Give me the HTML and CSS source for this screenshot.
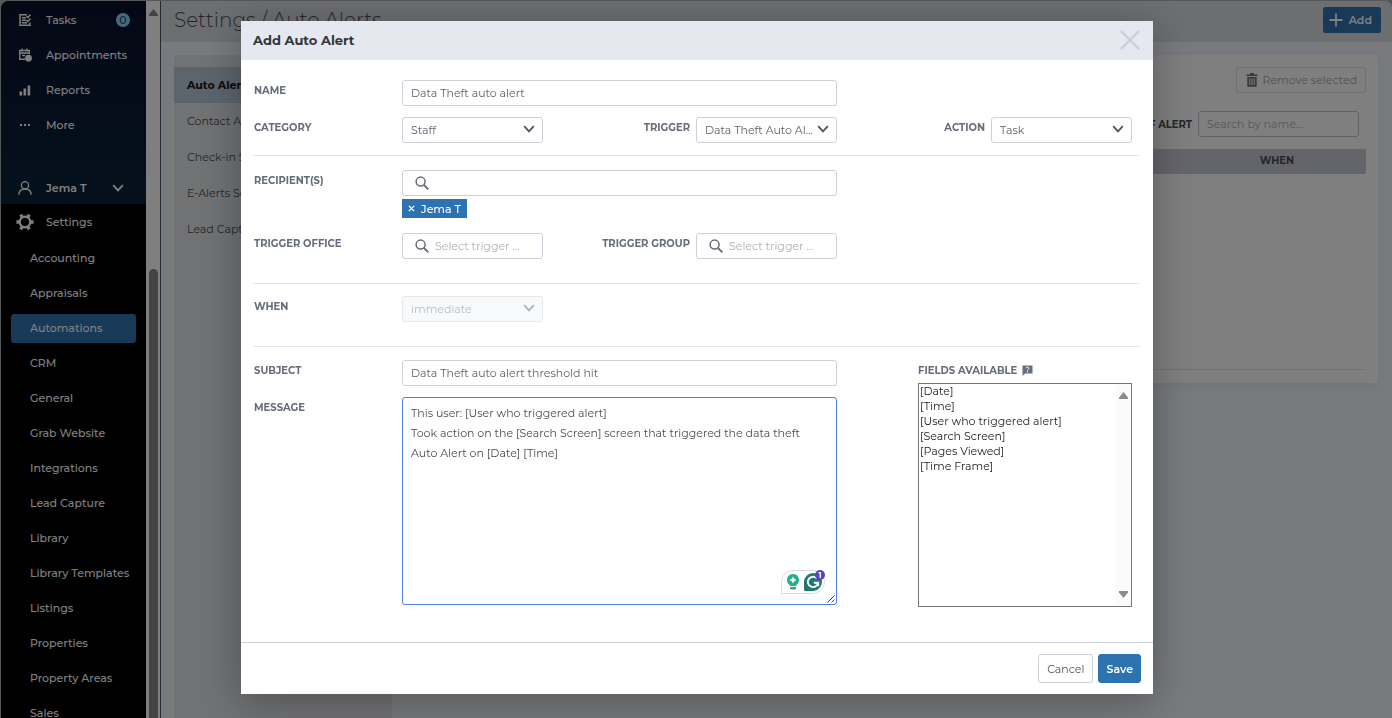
FILE: index.html
```html
<!DOCTYPE html>
<html lang="en">
<head>
<meta charset="UTF-8">
<meta name="viewport" content="width=device-width, initial-scale=1">
<title>Settings / Auto Alerts</title>
<link rel="stylesheet" href="styles.css">
</head>
<body>

<svg class="defs" width="0" height="0" aria-hidden="true">
  <symbol id="chevron" viewBox="0 0 12 8"><path d="M1.2 1.2 6 6.4l4.8-5.2" fill="none" stroke="currentColor" stroke-width="1.8"/></symbol>
  <symbol id="search" viewBox="0 0 14 14"><circle cx="5.6" cy="5.6" r="4.5" fill="none" stroke="currentColor" stroke-width="1.5"/><path d="m9 9 4.3 4.3" stroke="currentColor" stroke-width="1.8"/></symbol>
</svg>

<div class="app">
  <nav class="sidebar">
    <div class="nav-top">
      <a href="#" class="nav-item">
        <svg class="icon" viewBox="0 0 14 14" fill="none" stroke="currentColor" stroke-width="1.5"><path d="M9 1.7H2v10.6h10V9.5M4 4.7h4M4 7.2h4M4 9.7h5M8.5 3.2l1.3 1.3L12.5 1.5M8.5 7.2l1.3 1.3L12.5 5.5"/></svg>
        Tasks <span class="count">0</span>
      </a>
      <a href="#" class="nav-item">
        <svg class="icon" viewBox="0 0 14 14" fill="none" stroke="currentColor" stroke-width="1.4"><path d="M11.3 6V2.5H1.7v8.8H7M1.7 5h9.6M4 .5v3M9 .5v3M4 7.5h3"/><circle cx="10.5" cy="10.2" r="3.4" fill="currentColor" stroke="none"/></svg>
        Appointments
      </a>
      <a href="#" class="nav-item">
        <svg class="icon" viewBox="0 0 14 14" fill="currentColor"><path d="M1.5 8.5h2.6v4H1.5zM5.5 5.5h2.6v7H5.5zM9.6 2.5h2.6v10H9.6z"/></svg>
        Reports
      </a>
      <a href="#" class="nav-item">
        <svg class="icon" viewBox="0 0 14 14" fill="currentColor"><path d="M2 6h2v2H2zM6 6h2v2H6zM10 6h2v2h-2z"/></svg>
        More
      </a>
      <button type="button" class="nav-item user">
        <svg class="icon" viewBox="0 0 14 14" fill="none" stroke="currentColor" stroke-width="1.3"><circle cx="7" cy="4.2" r="3.6"/><path d="M.8 13.8C1 10 3.5 8 7 8s6 2 6.2 5.8"/></svg>
        Jema T
        <svg class="chev"><use href="#chevron"/></svg>
      </button>
    </div>
    <a href="#" class="nav-item settings">
      <svg class="icon gear" viewBox="0 0 18 18" fill="none" stroke="currentColor"><circle cx="9" cy="9" r="5.3" stroke-width="2.4"/><path d="M15 9h2.6M.4 9H3M12 3.8l1.3-2.25M4.7 16.45 6 14.2M12 14.2l1.3 2.25M4.7 1.55 6 3.8" stroke-width="3.4"/></svg>
      Settings
    </a>
    <div class="subnav">
      <a href="#">Accounting</a>
      <a href="#">Appraisals</a>
      <a href="#" class="active">Automations</a>
      <a href="#">CRM</a>
      <a href="#">General</a>
      <a href="#">Grab Website</a>
      <a href="#">Integrations</a>
      <a href="#">Lead Capture</a>
      <a href="#">Library</a>
      <a href="#">Library Templates</a>
      <a href="#">Listings</a>
      <a href="#">Properties</a>
      <a href="#">Property Areas</a>
      <a href="#">Sales</a>
    </div>
  </nav>
  <div class="scrollbar">
    <svg viewBox="0 0 9 7"><path d="M4.5 0 9 5.5V7H0V5.5z" fill="currentColor"/></svg>
    <div class="thumb"></div>
  </div>

  <main class="page">
    <header class="page-head">
      <h1>Settings / Auto Alerts</h1>
      <button type="button" class="add">
        <svg viewBox="0 0 14 14"><path d="M7 .5v13M.5 7h13" stroke="currentColor" stroke-width="1.8"/></svg>
        Add
      </button>
    </header>
    <div class="page-body">
      <nav class="side-tabs">
        <a href="#" class="active">Auto Alerts</a>
        <a href="#">Contact Alerts</a>
        <a href="#">Check-in Settings</a>
        <a href="#">E-Alerts Settings</a>
        <a href="#">Lead Capture</a>
      </nav>
      <section class="card">
        <div class="card-tools">
          <button type="button" class="remove">
            <svg viewBox="0 0 12 14" fill="currentColor"><path fill-rule="evenodd" d="M4 0h4v1.4h3.500V3H.5V1.4H4zM1.3 4h9.4v9.8H1.3zM3.3 5.5v6.5h1V5.5zm2.2 0v6.5h1V5.5zm2.2 0v6.5h1V5.5z"/></svg>
            Remove selected
          </button>
        </div>
        <div class="card-filter">
          <label for="alertSearch">TYPE OF ALERT</label>
          <input type="text" id="alertSearch" placeholder="Search by name...">
        </div>
        <table>
          <thead><tr><th>NAME</th><th>TYPE</th><th>WHEN</th></tr></thead>
        </table>
      </section>
    </div>
  </main>
</div>

<div class="overlay">
  <form class="modal" role="dialog" aria-labelledby="modalTitle">
    <header class="modal-head">
      <h2 id="modalTitle">Add Auto Alert</h2>
      <button type="button" class="close" aria-label="Close">
        <svg viewBox="0 0 20 20"><path d="m1 1 18 18M19 1 1 19" stroke="currentColor" stroke-width="2"/></svg>
      </button>
    </header>

    <div class="modal-body">
      <section class="fields basics">
        <label for="name">NAME</label>
        <input type="text" id="name" class="wide" value="Data Theft auto alert">
        <label for="category" class="first">CATEGORY</label>
        <div class="select">
          <select id="category"><option>Staff</option></select>
          <svg><use href="#chevron"/></svg>
        </div>
        <label for="trigger" class="end">TRIGGER</label>
        <div class="select">
          <select id="trigger"><option>Data Theft Auto Alert</option></select>
          <svg><use href="#chevron"/></svg>
        </div>
        <label for="action" class="end">ACTION</label>
        <div class="select">
          <select id="action"><option>Task</option></select>
          <svg><use href="#chevron"/></svg>
        </div>
      </section>

      <section class="fields who">
        <label for="recipients">RECIPIENT(S)</label>
        <div class="wide">
          <div class="search">
            <svg><use href="#search"/></svg>
            <input type="text" id="recipients">
          </div>
          <button type="button" class="chip">
            <svg viewBox="0 0 8 8"><path d="m1 1 6 6M7 1 1 7" stroke="currentColor" stroke-width="1.6"/></svg>
            Jema T
          </button>
        </div>
        <label for="office" class="first">TRIGGER OFFICE</label>
        <div class="search">
          <svg><use href="#search"/></svg>
          <input type="text" id="office" placeholder="Select trigger ...">
        </div>
        <label for="group" class="end">TRIGGER GROUP</label>
        <div class="search">
          <svg><use href="#search"/></svg>
          <input type="text" id="group" placeholder="Select trigger ...">
        </div>
      </section>

      <section class="fields when">
        <label for="when">WHEN</label>
        <div class="select">
          <select id="when" disabled><option>immediate</option></select>
          <svg><use href="#chevron"/></svg>
        </div>
      </section>

      <section class="content">
        <div class="compose">
          <label for="subject">SUBJECT</label>
          <input type="text" id="subject" value="Data Theft auto alert threshold hit">
          <label for="message">MESSAGE</label>
          <div class="message">
            <textarea id="message">This user: [User who triggered alert]
Took action on the [Search Screen] screen that triggered the data theft
Auto Alert on [Date] [Time]</textarea>
            <div class="assist">
              <svg class="bulb" viewBox="0 0 14 16"><path d="M7 0a6 6 0 0 0-3.6 10.8L4 12h6l.6-1.2A6 6 0 0 0 7 0z" fill="#25b08b"/><path d="M4 13h6v1.3l-1 1.2H5l-1-1.2z" fill="#4b9c86"/><path d="M7 2.5 8.2 4.8 10.5 6 8.2 7.2 7 9.5 5.8 7.2 3.5 6l2.3-1.2z" fill="#fff"/></svg>
              <svg class="mark" viewBox="0 0 18 18"><path d="M9 0a9 9 0 1 1 0 18H1.2A1.2 1.2 0 0 1 0 16.8V9a9 9 0 0 1 9-9z" fill="#1f7a6b"/><path d="M13 5.500A5.2 5.2 0 1 0 14.2 9.7H9.8M14.2 9.2v4" fill="none" stroke="#fff" stroke-width="1.9"/></svg>
              <span class="alert-count">1</span>
            </div>
            <svg class="grip" viewBox="0 0 8 8"><path d="M.5 7.5l7-7M4.5 7.5l3-3" stroke="#444" stroke-width="1"/></svg>
          </div>
        </div>
        <div class="available">
          <label for="fields">FIELDS AVAILABLE
            <svg viewBox="0 0 11 11"><path d="M.5.5h10v8H3L.5 11z" fill="currentColor"/><path d="M4 3.2c.2-1.7 3-1.5 2.9.1C6.900 4.300 5.500 4.300 5.500 5.500M5.500 6.300v1.200" stroke="#fff" fill="none"/></svg>
          </label>
          <div class="listbox">
            <select id="fields" multiple>
              <option>[Date]</option>
              <option>[Time]</option>
              <option>[User who triggered alert]</option>
              <option>[Search Screen]</option>
              <option>[Pages Viewed]</option>
              <option>[Time Frame]</option>
            </select>
            <div class="list-scroll">
              <svg viewBox="0 0 9 7"><path d="M4.5 0 9 5.5V7H0V5.5z" fill="currentColor"/></svg>
              <svg viewBox="0 0 9 7"><path d="M4.5 7 9 1.5V0H0v1.5z" fill="currentColor"/></svg>
            </div>
          </div>
        </div>
      </section>
    </div>

    <footer class="modal-foot">
      <button type="button" class="cancel">Cancel</button>
      <button type="submit" class="save">Save</button>
    </footer>
  </form>
</div>

</body>
</html>
```

FILE: styles.css
```css
* {
  box-sizing: border-box;
}

body {
  margin: 0;
  height: 100vh;
  overflow: hidden;
  background: #a9b1b3;
  font-family: Montserrat, Inter, "Open Sans", sans-serif;
  font-size: 11px;
  color: #555;
}

a {
  color: inherit;
  text-decoration: none;
}

button, input, select, textarea {
  font: inherit;
  color: inherit;
  margin: 0;
}

button {
  cursor: pointer;
}

.defs {
  position: absolute;
}

.app {
  display: flex;
  height: 100vh;
  padding: 1px 0 0 1px;
}

/* Sidebar */
.sidebar {
  width: 145px;
  flex-shrink: 0;
  overflow: hidden;
  background: #000;
  color: #fff;
  font-weight: 500;
  border-top-left-radius: 8px;
}

.nav-top {
  padding-top: 1px;
  background: linear-gradient(#08102a, #08233a);
}

.nav-item {
  display: flex;
  align-items: center;
  width: 100%;
  height: 35px;
  padding-left: 17px;
}

.icon {
  width: 14px;
  height: 14px;
  margin-right: 14px;
}

.count {
  width: 14px;
  height: 14px;
  margin-left: auto;
  margin-right: 16px;
  border-radius: 50%;
  background: #8ed0ff;
  color: #20456d;
  line-height: 14px;
  text-align: center;
}

.user {
  height: 33px;
  margin-top: 29px;
  border: none;
  background: none;
  font-weight: 600;
  padding-right: 22px;
}

.chev {
  width: 12px;
  height: 8px;
  margin-left: auto;
}

.settings {
  padding-left: 15px;
}

.gear {
  width: 18px;
  height: 18px;
  margin-right: 12px;
}

.subnav {
  display: flex;
  flex-direction: column;
  gap: 6px;
  padding: 5px 10px;
}

.subnav a {
  height: 29px;
  flex-shrink: 0;
  padding-left: 19px;
  border-radius: 3px;
  line-height: 29px;
  white-space: nowrap;
}

.subnav .active {
  background: #3072b0;
}

.scrollbar {
  display: flex;
  flex-direction: column;
  align-items: center;
  width: 15px;
  flex-shrink: 0;
  padding-top: 8px;
  background: #fff;
  border-right: 1px solid #4c5068;
  color: #888;
}

.scrollbar svg {
  width: 9px;
  height: 7px;
  flex-shrink: 0;
}

.thumb {
  width: 9px;
  flex: 1;
  margin-top: 253px;
  border-radius: 5px 5px 0 0;
  background: #888;
}

/* Page behind the dialog */
.page {
  display: flex;
  flex-direction: column;
  flex: 1;
  background: #f2f4fa;
  border-top-right-radius: 8px;
  color: #4a4d58;
}

.page-head {
  display: flex;
  align-items: center;
  justify-content: space-between;
  height: 41px;
  padding: 0 11px 3px 13px;
  background: #dadce0;
  border-top-right-radius: 8px;
}

.page-head h1 {
  margin: 0;
  font-size: 20px;
  font-weight: 300;
}

.add {
  display: flex;
  align-items: center;
  gap: 6px;
  height: 26px;
  padding: 0 9px 0 6px;
  border: none;
  border-radius: 2px;
  background: #3072b0;
  color: #fff;
  font-weight: 600;
}

.add svg {
  width: 14px;
  height: 14px;
}

.page-body {
  display: flex;
  align-items: flex-start;
  flex: 1;
  padding: 13px 14px 0 13px;
}

.side-tabs {
  align-self: stretch;
  width: 218px;
  padding-top: 12px;
  background: #e2e4e8;
}

.side-tabs a {
  display: block;
  height: 36px;
  padding-left: 13px;
  line-height: 36px;
}

.side-tabs .active {
  background: #bacad9;
  color: #111;
  font-weight: 700;
}

.card {
  flex: 1;
  height: 328px;
  padding: 12px;
  border-radius: 0 3px 3px 0;
  background: #fff;
  box-shadow: 0 4px 10px rgba(0, 0, 0, 0.05);
}

.card-tools, .card-filter {
  display: flex;
  align-items: center;
  justify-content: flex-end;
}

.remove {
  display: flex;
  align-items: center;
  gap: 4px;
  height: 26px;
  padding: 0 8px 0 9px;
  border: 1px solid #e0e0e4;
  border-radius: 3px;
  background: none;
  color: #a5a5aa;
}

.remove svg {
  width: 12px;
  height: 14px;
  color: #72757c;
}

.card-filter {
  gap: 6px;
  margin-top: 18px;
}

.card-filter label {
  font-weight: 700;
  font-size: 10px;
}

.card-filter input {
  width: 161px;
  margin-right: 7px;
  border-color: #c0c2c8;
  background: none;
}

.card table {
  width: 100%;
  height: 221px;
  margin-top: 12px;
  border-collapse: collapse;
  border-bottom: 1px solid #e4e4e6;
}

.card thead {
  vertical-align: top;
}

.card th {
  height: 25px;
  padding: 0;
  font-size: 10px;
  background: linear-gradient(#c9cbd5, #c9cbd5) 0 0 / 100% 25px no-repeat;
  line-height: 23px;
}

.card th:last-child {
  width: 178px;
}

/* Dialog */
.overlay {
  position: fixed;
  inset: 0;
  padding: 21px 0 24px 2px;
  background: rgba(0, 0, 0, 0.5);
}

.modal {
  max-width: 912px;
  margin: 0 auto;
  background: #fff;
  box-shadow: 0 8px 40px rgba(0, 0, 0, 0.3);
}

.modal-head {
  display: flex;
  align-items: center;
  justify-content: space-between;
  height: 39px;
  padding: 0 13px 2px 12px;
  background: #e5e8ee;
  color: #33353f;
}

.modal-head h2 {
  margin: 0;
  font-size: 13px;
  font-weight: 700;
}

.close {
  width: 20px;
  height: 20px;
  padding: 0;
  border: none;
  background: none;
  color: #c9ccd6;
}

.close svg {
  display: block;
}

.modal-body {
  padding: 0 13px 0 12px;
}

.modal label {
  padding-top: 4px;
  color: #666c7a;
  font-size: 10px;
  font-weight: 700;
  line-height: 13px;
}

.fields {
  display: grid;
  grid-template-columns: 148px 1fr 153px 1fr 154px 1fr;
  padding: 0 8px 0 1px;
  border-bottom: 1px solid #e5e6ea;
}

.basics {
  row-gap: 11px;
  padding-top: 20px;
  padding-bottom: 12px;
}

.who {
  row-gap: 15px;
  padding-top: 14px;
  padding-bottom: 24px;
}

.when {
  padding-top: 12px;
  padding-bottom: 24px;
}

.wide {
  grid-column: 2 / 5;
}

.first {
  grid-column: 1;
}

.end {
  padding-right: 6px;
  text-align: right;
}

input, .select select, textarea {
  width: 100%;
  height: 26px;
  padding: 0 8px;
  border: 1px solid #cdd0d8;
  border-radius: 3px;
  background: #fff;
  outline: none;
  color: #626266;
}

input::placeholder {
  color: #b0b0b4;
}

.select, .search {
  position: relative;
}

.select select {
  padding-right: 20px;
  appearance: none;
  text-overflow: ellipsis;
}

.select svg {
  position: absolute;
  top: 8px;
  right: 8px;
  width: 12px;
  height: 8px;
  pointer-events: none;
}

.select select:disabled {
  background: #f8f9fb;
  border-color: #e6e8ec;
  color: #bcbcc0;
  opacity: 1;
}

.select select:disabled + svg {
  color: #b0b0b4;
}

.search svg {
  position: absolute;
  top: 6px;
  left: 13px;
  width: 14px;
  height: 14px;
  color: #666b76;
}

.search input {
  display: block;
  padding-left: 32px;
}

.chip {
  display: flex;
  align-items: center;
  gap: 6px;
  height: 19px;
  margin-top: 3px;
  padding: 0 6px;
  border: none;
  background: #2d72b1;
  color: #fff;
  font-weight: 500;
}

.chip svg {
  width: 7px;
  height: 7px;
}

.content {
  display: flex;
  justify-content: space-between;
  padding: 13px 8px 35px 1px;
}

.compose {
  display: grid;
  grid-template-columns: 148px 435px;
  grid-template-rows: 26px 208px;
  row-gap: 11px;
}

.message {
  position: relative;
}

textarea {
  display: block;
  height: 100%;
  padding: 5px 8px;
  border-color: #4a80e8;
  line-height: 20px;
  color: #4c4d53;
  resize: none;
}

.grip {
  position: absolute;
  right: 2px;
  bottom: 2px;
  width: 8px;
  height: 8px;
}

.assist {
  position: absolute;
  right: 12px;
  bottom: 11px;
  display: flex;
  align-items: center;
  gap: 4px;
  width: 44px;
  height: 24px;
  padding-left: 4px;
  border: 1px solid #d9dae6;
  border-radius: 12px 12px 12px 0;
  background: #fff;
}

.bulb {
  width: 14px;
  height: 16px;
}

.mark {
  width: 18px;
  height: 18px;
}

.alert-count {
  position: absolute;
  top: -1px;
  right: -1px;
  width: 10px;
  height: 10px;
  border-radius: 50%;
  background: #5b3fd0;
  color: #fff;
  font-size: 8px;
  font-weight: 700;
  line-height: 10px;
  text-align: center;
}

.available {
  width: 214px;
}

.available label {
  display: flex;
  align-items: center;
  gap: 5px;
  height: 23px;
  padding: 0 0 3px;
}

.available label svg {
  width: 11px;
  height: 11px;
}

.listbox {
  position: relative;
}

.listbox select {
  display: block;
  width: 100%;
  height: 224px;
  padding: 0;
  border: 1px solid #767676;
  border-radius: 0;
  background: #fff;
  outline: none;
  color: #222;
  scrollbar-width: none;
}

.listbox option {
  min-height: 15px;
  padding: 0 1px;
  line-height: 15px;
}

.list-scroll {
  position: absolute;
  top: 1px;
  right: 1px;
  bottom: 1px;
  display: flex;
  flex-direction: column;
  align-items: center;
  justify-content: space-between;
  width: 15px;
  padding: 8px 0;
  background: #fbfbfb;
  color: #8a8a8a;
}

.list-scroll svg {
  width: 9px;
  height: 7px;
}

.modal-foot {
  display: flex;
  justify-content: flex-end;
  gap: 5px;
  padding: 11px 12px;
  border-top: 1px solid #cdd2da;
}

.modal-foot button {
  height: 29px;
  padding: 0 8px;
  border: 1px solid #cdd0d8;
  border-radius: 3px;
  background: #fff;
}

.modal-foot .save {
  padding: 0 7px;
  border-color: #2d72b1;
  background: #2d72b1;
  color: #fff;
  font-weight: 600;
}
```
